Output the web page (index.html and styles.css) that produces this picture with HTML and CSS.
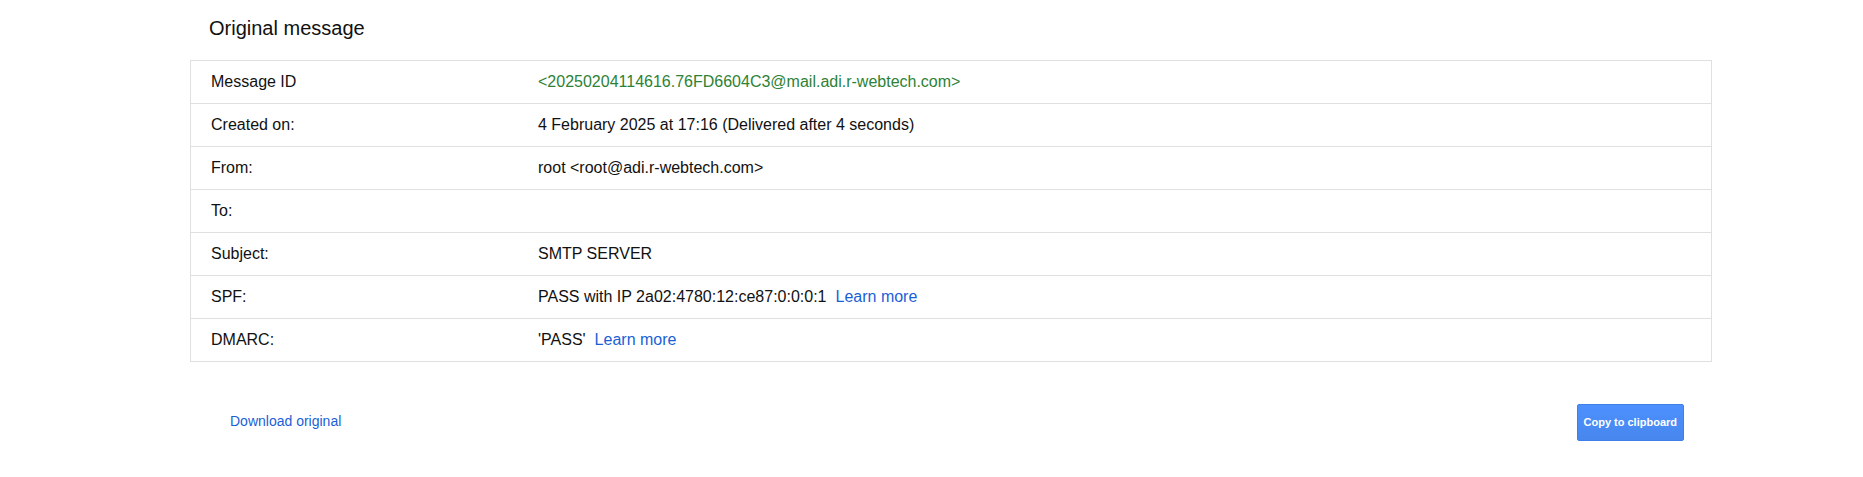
FILE: index.html
```html
<!DOCTYPE html>
<html lang="en">
<head>
<meta charset="utf-8">
<title>Original message</title>
<link rel="stylesheet" href="styles.css">
</head>
<body>
<div class="page">
  <h1 class="title">Original message</h1>
  <div class="details">
    <div class="row">
      <div class="label">Message ID</div>
      <div class="value msgid">&lt;20250204114616.76FD6604C3@mail.adi.r-webtech.com&gt;</div>
    </div>
    <div class="row">
      <div class="label">Created on:</div>
      <div class="value">4 February 2025 at 17:16 (Delivered after 4 seconds)</div>
    </div>
    <div class="row">
      <div class="label">From:</div>
      <div class="value">root &lt;root@adi.r-webtech.com&gt;</div>
    </div>
    <div class="row">
      <div class="label">To:</div>
      <div class="value"></div>
    </div>
    <div class="row">
      <div class="label">Subject:</div>
      <div class="value">SMTP SERVER</div>
    </div>
    <div class="row">
      <div class="label">SPF:</div>
      <div class="value">PASS with IP 2a02:4780:12:ce87:0:0:0:1<a class="learn" href="#">Learn more</a></div>
    </div>
    <div class="row">
      <div class="label">DMARC:</div>
      <div class="value">'PASS'<a class="learn" href="#">Learn more</a></div>
    </div>
  </div>
  <div class="footer">
    <a class="download" href="#">Download original</a>
    <button class="copy" type="button">Copy to clipboard</button>
  </div>
</div>
</body>
</html>
```

FILE: styles.css
```css
html, body {
  margin: 0;
  padding: 0;
  background: #fff;
}
body {
  font-family: "Liberation Sans", Arial, sans-serif;
  color: #222;
}
.page {
  width: 1522px;
  margin-left: 190px;
}
.title {
  margin: 0;
  padding: 16px 0 20px 19px;
  font-size: 20px;
  line-height: 24px;
  font-weight: normal;
  color: #111;
}
.details {
  border: 1px solid #e0e0e0;
  border-bottom: none;
}
.row {
  display: flex;
  height: 43px;
  box-sizing: border-box;
  border-bottom: 1px solid #e0e0e0;
  font-size: 16px;
  line-height: 42px;
}
.label {
  width: 327px;
  padding-left: 20px;
  flex: none;
  color: #111;
}
.value {
  flex: 1;
  padding-left: 0;
  color: #111;
  white-space: nowrap;
}
.msgid {
  color: #2d8236;
}
.learn {
  margin-left: 9px;
  color: #1a5fd6;
  text-decoration: none;
}
.footer {
  display: flex;
  justify-content: space-between;
  align-items: baseline;
  margin-top: 42px;
  padding: 0 28px 0 40px;
}
.download {
  font-size: 14px;
  color: #1a5fd6;
  text-decoration: none;
}
.copy {
  height: 37px;
  box-sizing: border-box;
  padding: 0 6px;
  border: 1px solid #3f7fe8;
  border-radius: 2px;
  background: linear-gradient(#4d90fe, #4787ed);
  color: #fff;
  font-family: "Liberation Sans", Arial, sans-serif;
  font-size: 11px;
  font-weight: bold;
  line-height: 35px;
  cursor: pointer;
}
```
